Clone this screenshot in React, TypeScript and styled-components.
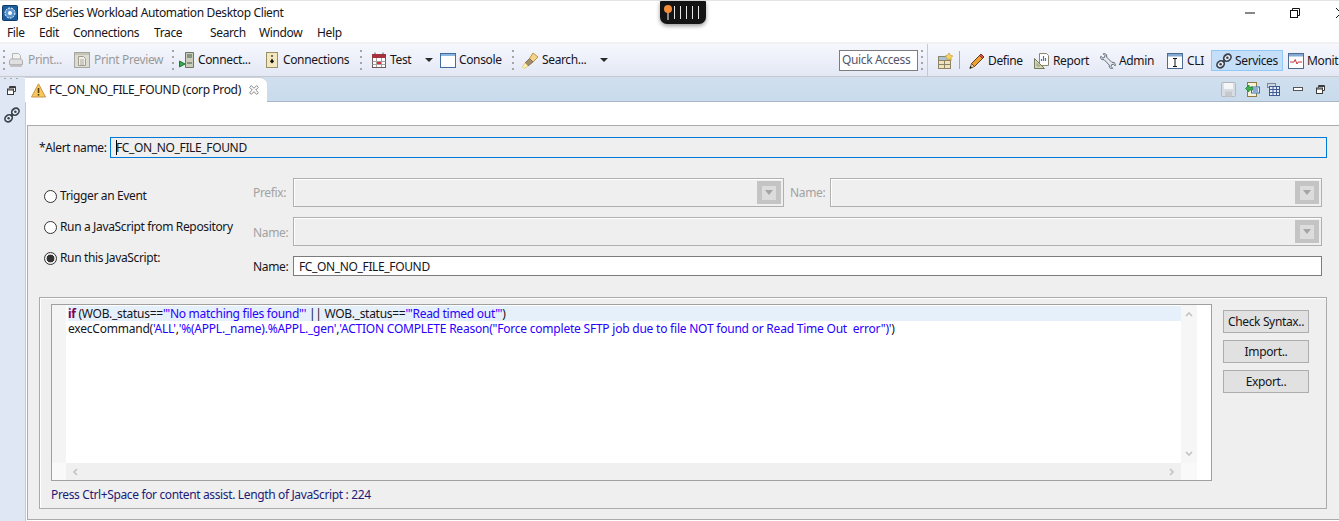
import React from "react";
import styled, { createGlobalStyle } from "styled-components";

const Global = createGlobalStyle`
  html, body { margin: 0; padding: 0; background: #fff; }
  body { font-family: "Noto Sans", "Open Sans", sans-serif; font-size: 12px; letter-spacing: -0.36px; color: #151520; }
  * { box-sizing: border-box; }
`;

const Page = styled.div`
  position: relative; width: 1339px; height: 521px; overflow: hidden; background: #fff;
  display: flex; flex-direction: column; line-height: 16px;
`;
const TitleBar = styled.div`
  height: 24px; flex: none; border-top: 1px solid #e4e4e4; display: flex; align-items: center; padding-left: 2px;
`;
const TitleText = styled.span` margin-left: 5px; white-space: nowrap; `;
const WinControls = styled.div` margin-left: auto; display: flex; align-items: center; `;
const WinBtn = styled.span<{ $ml: number }>` margin-left: ${p => p.$ml}px; display: flex; `;
const Recorder = styled.div`
  position: absolute; left: 660px; top: 1px; width: 46px; height: 23px; background: #141414;
  border-radius: 1px 1px 7px 7px; box-shadow: 0 2px 4px rgba(0,0,0,.4);
`;
const MenuBar = styled.div` height: 18px; flex: none; display: flex; align-items: center; padding-left: 7px; `;
const Menu = styled.span<{ $w: number }>` width: ${p => p.$w}px; flex: none; white-space: nowrap; `;
const Toolbar = styled.div`
  height: 35px; flex: none; display: flex; align-items: center; position: relative;
  border-top: 2px solid #f1f1f3; border-bottom: 1px solid #c9c9cd;
  background: linear-gradient(#f6f8fd, #e3e8f5);
`;
const Item = styled.span<{ $ml?: number; $w?: number; $off?: boolean; $drop?: boolean }>`
  margin-left: ${p => p.$ml ?? 0}px; width: ${p => (p.$w ? `${p.$w}px` : "auto")}; display: flex; align-items: center; white-space: nowrap; flex: none;
  color: ${p => (p.$off ? "#9a9a9a" : "inherit")};
  padding-top: ${p => (p.$drop ? 2 : 0)}px;
`;
const Label = styled.span<{ $ml?: number }>` margin-left: ${p => p.$ml ?? 4}px; `;
const Grip = styled.span<{ $ml: number }>`
  margin-left: ${p => p.$ml}px; width: 2px; height: 21px; flex: none;
  background: repeating-linear-gradient(#a5a5a5 0 2px, transparent 2px 6px);
`;
const Sep = styled.span<{ $ml: number }>` margin-left: ${p => p.$ml}px; width: 1px; height: 18px; background: #a9a9a9; flex: none; `;
const SwitcherEdge = styled.span`
  margin-left: 4px; width: 1px; align-self: stretch; flex: none; background: #c9c9cd;
`;
const Caret = styled.span`
  width: 8px; height: 0; flex: none;
  border-left: 4px solid transparent; border-right: 4px solid transparent; border-top: 4px solid #2a2a2a;
`;
const QuickAccess = styled.span`
  margin-left: 231px; width: 79px; height: 21px; flex: none; border: 1px solid #7d7d7d; background: #fff;
  color: #55556a; padding-left: 2px; line-height: 18px; white-space: nowrap; overflow: hidden;
`;
const ActiveItem = styled(Item)`
  height: 21px; margin-top: 1px; background: #c5dff8; border: 1px solid #90c8f6; padding-left: 4px; padding-top: 1px;
`;
const Body = styled.div` flex: 1; display: flex; min-height: 0; `;
const Rail = styled.div`
  width: 26px; flex: none; background: #dfe7f5; border-right: 1px solid #c3c9d3;
  display: flex; flex-direction: column; align-items: flex-start; padding: 1px 0 0 4px;
`;
const RailGrip = styled.span`
  width: 16px; height: 1px; flex: none; background: repeating-linear-gradient(90deg, #a5a5a5 0 2px, transparent 2px 6px);
`;
const RailIcon = styled.span<{ $mt: number; $ml: number }>` display: flex; margin: ${p => p.$mt}px 0 0 ${p => p.$ml}px; `;
const Main = styled.div` flex: 1; min-width: 0; display: flex; flex-direction: column; `;
const TabBand = styled.div`
  height: 25px; flex: none; display: flex; align-items: stretch;
  background: linear-gradient(#cfdfee, #c9dbec); border-bottom: 1px solid #a9b6c6;
`;
const Tab = styled.div`
  width: 242px; margin-left: -1px; height: 25px; background: #fff; border-radius: 0 7px 0 0; display: flex; align-items: center; padding-left: 6px; white-space: nowrap;
  border-top: 1px solid #c8d2de;
`;
const TabClose = styled.span` margin-left: 8px; display: flex; `;
const TabTools = styled.div` margin-left: auto; display: flex; align-items: center; padding-right: 14px; `;
const Gap = styled.div` height: 23px; flex: none; `;
const Form = styled.div`
  margin-left: 1px; height: 395px; flex: none; background: #efefef; border: 1px solid #ababab; border-right: none; padding: 11px 0 0 11px;
`;
const AlertRow = styled.div` display: flex; align-items: center; height: 21px; `;
const AlertLabel = styled.span` width: 71px; white-space: nowrap; `;
const AlertInput = styled.div`
  width: 1217px; height: 21px; border: 1px solid #0078d7; padding-left: 5px; line-height: 19px; position: relative;
`;
const Cursor = styled.span` position: absolute; left: 5px; top: 2px; width: 1px; height: 15px; background: #000; `;
const Options = styled.div` display: flex; margin-top: 20px; `;
const RadioCol = styled.div` width: 214px; flex: none; padding: 10px 0 0 5px; display: flex; flex-direction: column; gap: 15px; `;
const RadioRow = styled.div` display: flex; align-items: center; height: 16px; white-space: nowrap; `;
const RadioMark = styled.span<{ $on?: boolean }>`
  width: 13px; height: 13px; border: 1px solid #333; border-radius: 50%; background: ${p => (p.$on ? "radial-gradient(circle, #333 0 3.6px, transparent 4.2px)" : "#fff")}; margin-right: 3px; flex: none;
`;
const FieldCol = styled.div` width: 1069px; display: flex; flex-direction: column; gap: 10px; `;
const FieldRow = styled.div` display: flex; align-items: center; `;
const FieldLabel = styled.span<{ $off?: boolean; $ml?: number; $drop?: boolean }>`
  width: 40px; flex: none; margin-left: ${p => p.$ml ?? 0}px; white-space: nowrap; color: ${p => (p.$off ? "#a2a2a2" : "inherit")};
  padding-top: ${p => (p.$drop ? 2 : 0)}px;
`;
const Combo = styled.div<{ $w: number }>`
  width: ${p => p.$w}px; height: 29px; flex: none; border: 1px solid #b0b0b0; box-shadow: inset 1px 1px 0 #fff; background: #efefef;
  display: flex; justify-content: flex-end; align-items: center; padding-right: 2px;
`;
const ComboBtn = styled.span`
  width: 24px; height: 23px; background: #c4c4c4; display: flex; align-items: center; justify-content: center;
`;
const ComboInner = styled.span`
  width: 14px; height: 14px; background: #dcdcdc; display: flex; align-items: center; justify-content: center;
`;
const ComboArrow = styled.span`
  width: 0; height: 0; border-left: 4px solid transparent; border-right: 4px solid transparent; border-top: 5px solid #a4a4a4;
`;
const TextField = styled.div<{ $w: number }>`
  width: ${p => p.$w}px; height: 20px; border: 1px solid #7c7c7c; background: #fff; padding-left: 5px; line-height: 20px;
`;
const Group = styled.div`
  margin-top: 21px; width: 1288px; height: 212px; border: 1px solid #ababab; box-shadow: inset 1px 1px 0 #fff; padding: 6px 0 0 11px;
`;
const GroupTop = styled.div` display: flex; `;
const Editor = styled.div`
  width: 1161px; height: 177px; border: 1px solid #a0a0a0; background: #fff; display: grid;
  grid-template-columns: 14px 1115px 16px 14px; grid-template-rows: 158px 17px;
`;
const Ruler = styled.div<{ $light?: boolean }>` background: ${p => (p.$light ? "#f9f9f9" : "#f4f4f4")}; `;
const Code = styled.div` padding: 1px 0 0 2px; white-space: pre; `;
const CodeLine = styled.div<{ $cur?: boolean }>`
  height: 15px; line-height: 15px; background: ${p => (p.$cur ? "#e6f0fb" : "transparent")};
  letter-spacing: ${p => (p.$cur ? -0.28 : -0.22)}px;
`;
const Keyword = styled.b` color: #7f0055; font-weight: 700; `;
const Str = styled.span` color: #2a00ff; `;
const VScroll = styled.div`
  background: #f6f6f6; display: flex; flex-direction: column; justify-content: space-between; align-items: center; padding: 5px 0;
`;
const HScroll = styled.div`
  background: #f0f0f0; display: flex; justify-content: space-between; align-items: center; padding: 0 5px 0 5px;
`;
const Side = styled.div` margin: 6px 0 0 11px; display: flex; flex-direction: column; gap: 7px; `;
const Button = styled.div`
  width: 86px; height: 23px; background: #e1e1e1; border: 1px solid #adadad; text-align: center; line-height: 21px; white-space: nowrap;
`;
const Status = styled.div` margin-top: 6px; color: #1c1c78; `;

const Ico = ({ w = 16, h = 16, children }: { w?: number; h?: number; children: React.ReactNode }) => (
  <svg width={w} height={h} viewBox={`0 0 ${w} ${h}`} fill="none" style={{ display: "block", flex: "none" }}>{children}</svg>
);

const Logo = () => (
  <Ico>
    <rect x="0.5" y="0.5" width="15" height="15" rx="1" fill="#1b5e9e" stroke="#0d3b6b" />
    <circle cx="8" cy="8" r="5" fill="#5a93cc" stroke="#fff" strokeDasharray="2 1" />
    <circle cx="8" cy="8" r="2" fill="#fff" />
  </Ico>
);
const PrintIco = () => (
  <Ico>
    <path d="M4.5 1.5h6l2 2v5h-8z" fill="#f2f2f2" stroke="#b5b5b5" />
    <path d="M1.500 9c0-1 1-2 2-2h9c1 0 2 1 2 2v3.500h-13z" fill="#e0e0e0" stroke="#adadad" />
    <path d="M1.500 12.500h13l-1 2.500h-11z" fill="#c2c2c2" />
  </Ico>
);
const PreviewIco = () => (
  <Ico>
    <rect x="0.5" y="0.5" width="15" height="15" fill="#dcdcd2" stroke="#a6a69a" />
    <path d="M1 1h14v2H1z" fill="#c4c4b8" />
    <path d="M4.500 4.500h5l2 2v7h-7z" fill="#efefe8" stroke="#9d9d92" />
    <path d="M6 8h4M6 10h4M6 12h4" stroke="#a8a89c" />
  </Ico>
);
const ConnectIco = () => (
  <Ico>
    <path d="M6.500 0.500h8v15h-8z" fill="#c9cdb9" stroke="#6f7565" />
    <path d="M8 3h5M8 5h5" stroke="#40604a" />
    <rect x="8" y="10" width="5" height="2" fill="#8a9180" />
    <path d="M0.500 9v6l5.500-3z" fill="#37a84c" stroke="#1f7a33" />
  </Ico>
);
const ConnectionsIco = () => (
  <Ico w={12} h={16}>
    <rect x="0.500" y="0.500" width="11" height="15" fill="#f3e7bd" stroke="#9c8f64" />
    <circle cx="6" cy="4" r="1" fill="#444" />
    <path d="M6 6.500l2 3-2 2-2-2z" fill="#111" />
  </Ico>
);
const CalendarIco = () => (
  <Ico w={14} h={16}>
    <rect x="0.500" y="2.500" width="13" height="13" fill="#fff" stroke="#6f5a5a" />
    <rect x="0" y="2" width="14" height="4" fill="#a92f3a" />
    <path d="M3 0.500v3M11 0.500v3" stroke="#555" />
    <path d="M0.500 9.500h13M0.500 12.500h13M4.500 6v9M9.500 6v9" stroke="#a9a0a0" />
    <rect x="5" y="10" width="4" height="2" fill="#d2343f" />
  </Ico>
);
const ConsoleIco = () => (
  <Ico>
    <rect x="0.500" y="1.500" width="15" height="14" fill="#fff" stroke="#3f6d9f" />
    <rect x="1" y="2" width="14" height="2" fill="#8db6df" />
  </Ico>
);
const TorchIco = () => (
  <Ico w={17} h={17}>
    <path d="M11 1l5 4-5 5-3.500-3.500z" fill="#f2d48a" stroke="#b7892f" strokeWidth=".9" />
    <path d="M7.500 6.500L11 10l-5 4-3-3z" fill="#a58e6a" stroke="#7c6a4c" strokeWidth=".9" />
    <path d="M3 11l3 3-4 2.500L.5 15z" fill="#fff4bd" stroke="#e2c25a" strokeWidth=".8" />
  </Ico>
);
const PerspIco = () => (
  <Ico w={15} h={16}>
    <rect x="0.500" y="3.500" width="12" height="12" fill="#f1e2bd" stroke="#8d8567" />
    <rect x="1" y="4" width="11" height="3" fill="#a9c3dc" />
    <path d="M0.500 7.500h12M0.500 11.500h12M6.500 7.500v8" stroke="#8d8567" />
    <path d="M11 0l1.200 2.200L14.800 3l-2 1.700.5 2.500L11 6l-2.300 1.200.5-2.500L7.200 3l2.600-.8z" fill="#f8d665" stroke="#c79a2c" strokeWidth=".7" />
  </Ico>
);
const PencilIco = () => (
  <Ico>
    <path d="M12 1l3 3-9.500 9.500-3-3z" fill="#f0a030" stroke="#5f4018" />
    <path d="M12 1l3 3-1.500 1.500-3-3z" fill="#d9534a" stroke="#6b2a1c" strokeWidth=".8" />
    <path d="M2.500 10.500l3 3-4.500 2z" fill="#f0d9a8" stroke="#5f4018" strokeWidth=".8" />
    <path d="M.5 15.500l.8-2.500 1.700 1.700z" fill="#111" />
  </Ico>
);
const ReportIco = () => (
  <Ico w={15} h={16}>
    <path d="M5.500 0.500h7l2 2v10h-9z" fill="#fff" stroke="#8a8a6f" />
    <path d="M7.500 8V6M9.500 8V3M11.500 8V5" stroke="#3f77b8" strokeWidth="1.200" />
    <path d="M0.500 5.500v10h10z" fill="#cfd2ac" fillOpacity=".85" stroke="#747a5a" />
    <path d="M3 10.500v2.500h2.500z" fill="#fff" stroke="#747a5a" strokeWidth=".7" />
  </Ico>
);
const WrenchIco = () => (
  <Ico>
    <path d="M.8 3.300l2 1.700 1.700-.6.500-1.700L3.200.8C5 .1 6.600 1.200 6.700 3l-.1 1.100 5.300 5.300 1.100-.1c1.800.1 2.900 1.700 2.200 3.500l-1.900-1.600-1.700.5-.6 1.700 1.700 2c-1.700.7-3.400-.4-3.500-2.200l.1-1.100L4 6.600l-1.100.1C1.100 6.600-.1 5 .8 3.300z" fill="#e6eaee" stroke="#4f5c69" strokeWidth=".9" />
  </Ico>
);
const CliIco = () => (
  <Ico>
    <rect x="0.500" y="0.500" width="15" height="15" fill="#fff" stroke="#4e6c90" />
    <rect x="1" y="1" width="14" height="2.500" fill="#84a9d2" />
    <path d="M6 5.500h4M6 13.500h4M8 5.500v8" stroke="#111" />
  </Ico>
);
const ChainIco = () => (
  <Ico>
    <g stroke="#39434f" strokeWidth="1.700" fill="#eef2f6">
      <ellipse cx="4.600" cy="11.300" rx="3.900" ry="3.200" transform="rotate(-40 4.600 11.300)" />
      <ellipse cx="11.400" cy="4.700" rx="3.900" ry="3.200" transform="rotate(-40 11.400 4.700)" />
    </g>
    <circle cx="4.600" cy="11.300" r="1.300" fill="#39434f" />
    <circle cx="11.400" cy="4.700" r="1.300" fill="#39434f" />
    <path d="M6.800 9.200l2.400-2.400" stroke="#39434f" strokeWidth="2.200" />
  </Ico>
);
const MonitorIco = () => (
  <Ico>
    <rect x="0.500" y="0.500" width="15" height="15" fill="#fff" stroke="#4e6c90" />
    <rect x="1" y="1" width="14" height="2.500" fill="#84a9d2" />
    <path d="M2 9h4l1.200-2.500L9 11l1.200-2H14" stroke="#c9343c" />
  </Ico>
);
const RestoreSmall = () => (
  <Ico w={9} h={9}>
    <path d="M2.500 2.500v-2h6v5h-2" stroke="#3c3c3c" fill="#fff" />
    <path d="M3 1.500h5" stroke="#3c3c3c" />
    <rect x="0.500" y="3" width="6" height="5.500" fill="#fff" stroke="#3c3c3c" />
    <path d="M1 4h5" stroke="#3c3c3c" />
  </Ico>
);
const Warn = () => (
  <Ico w={15} h={15}>
    <path d="M7.500 0.800L14.500 14H0.500z" fill="#f7c85a" stroke="#c99350" strokeLinejoin="round" />
    <path d="M7.500 5v5" stroke="#5a3a10" strokeWidth="1.600" />
    <rect x="6.700" y="11" width="1.600" height="1.600" fill="#5a3a10" />
  </Ico>
);
const CloseX = () => (
  <Ico w={10} h={10}>
    <path d="M.6 2.300L2.300.6 5 3.300 7.700.6l1.700 1.700L6.700 5l2.700 2.700-1.700 1.700L5 6.700 2.300 9.400.6 7.700 3.300 5z" fill="#fff" stroke="#7a7a7a" strokeWidth=".9" />
  </Ico>
);
const Chev = ({ d }: { d: string }) => (
  <Ico w={8} h={8}><path d={d} stroke="#c3c3c3" strokeWidth="1.700" /></Ico>
);
const SaveOff = () => (
  <Ico w={15} h={15}>
    <rect x="0.500" y="0.500" width="14" height="14" rx="1" fill="#d8dde3" stroke="#b4b8bd" />
    <rect x="3" y="1" width="9" height="6" fill="#f4f6f8" />
    <rect x="4" y="9.500" width="7" height="5" fill="#c6cad0" />
  </Ico>
);
const ImportIco = () => (
  <Ico w={15} h={15}>
    <rect x="2.500" y="0.500" width="9" height="14" fill="#f9f4d8" stroke="#8c7a45" />
    <rect x="6.500" y="5" width="8" height="6" fill="#dce9f7" stroke="#3a6fb0" />
    <path d="M8 7h5M8 9h5" stroke="#3a6fb0" />
    <path d="M0.500 6.500L4 3v2h3.500v3H4v2z" fill="#3cb34e" stroke="#1d7a32" strokeWidth=".7" />
  </Ico>
);
const TableIco = () => (
  <Ico w={13} h={13}>
    <rect x="0.500" y="0.500" width="8" height="4" fill="#cdd6e0" stroke="#7b8899" />
    <rect x="2.500" y="3.500" width="10" height="9" fill="#e5ecf6" stroke="#3f5a92" />
    <path d="M2.500 6.500h10M2.500 9.500h10M6 3.500v9M9.500 3.500v9" stroke="#3f5a92" />
  </Ico>
);

export default function App() {
  return (
    <Page>
      <Global />
      <TitleBar>
        <Logo />
        <TitleText>ESP dSeries Workload Automation Desktop Client</TitleText>
        <WinControls>
          <WinBtn $ml={0}><Ico w={10} h={2}><path d="M0 1h10" stroke="#111" /></Ico></WinBtn>
          <WinBtn $ml={35}>
            <Ico w={10} h={10}>
              <path d="M2.500 2V.5h7v7H8" stroke="#111" />
              <rect x="0.500" y="2.500" width="7" height="7" stroke="#111" />
            </Ico>
          </WinBtn>
          <WinBtn $ml={36}><Ico w={3} h={10}><path d="M0 0l5 5-5 5" stroke="#111" /></Ico></WinBtn>
        </WinControls>
      </TitleBar>
      <Recorder>
        <svg width="46" height="23" viewBox="0 0 46 23" fill="none" style={{ display: "block" }}>
          <path d="M8 9v10" stroke="#fff" />
          <circle cx="8" cy="8" r="4" fill="#f28c38" />
          <path d="M14.500 5v13M20.500 5v13M26.500 5v13M32.500 5v13M38.500 5v13" stroke="#e6e6e6" />
        </svg>
      </Recorder>
      <MenuBar>
        <Menu $w={32}>File</Menu>
        <Menu $w={34}>Edit</Menu>
        <Menu $w={81}>Connections</Menu>
        <Menu $w={56}>Trace</Menu>
        <Menu $w={49}>Search</Menu>
        <Menu $w={58}>Window</Menu>
        <Menu $w={30}>Help</Menu>
      </MenuBar>
      <Toolbar>
        <Grip $ml={3} />
        <Item $ml={3} $w={66} $off><PrintIco /><Label>Print...</Label></Item>
        <Item $w={98} $off><PreviewIco /><Label>Print Preview</Label></Item>
        <Grip $ml={0} />
        <Item $ml={5} $w={87}><ConnectIco /><Label $ml={3}>Connect...</Label></Item>
        <Item $w={94}><ConnectionsIco /><Label $ml={5}>Connections</Label></Item>
        <Grip $ml={0} />
        <Item $ml={10} $w={53}><CalendarIco /><Label>Test</Label></Item>
        <Caret />
        <Item $ml={7} $w={72}><ConsoleIco /><Label $ml={3}>Console</Label></Item>
        <Grip $ml={0} />
        <Item $ml={8} $w={78}><TorchIco /><Label $ml={3}>Search...</Label></Item>
        <Caret />
        <QuickAccess>Quick Access</QuickAccess>
        <Grip $ml={3} />
        <SwitcherEdge />
        <Item $ml={10} $w={15} $drop><PerspIco /></Item>
        <Sep $ml={6} />
        <Item $ml={9} $w={65} $drop><PencilIco /><Label $ml={3}>Define</Label></Item>
        <Item $w={66} $drop><ReportIco /><Label>Report</Label></Item>
        <Item $w={67} $drop><WrenchIco /><Label $ml={3}>Admin</Label></Item>
        <Item $w={44} $drop><CliIco /><Label>CLI</Label></Item>
        <ActiveItem $w={72}><ChainIco /><Label $ml={3}>Services</Label></ActiveItem>
        <Item $ml={5} $drop><MonitorIco /><Label $ml={3}>Monit</Label></Item>
      </Toolbar>
      <Body>
        <Rail>
          <RailGrip />
          <RailIcon $mt={7} $ml={3}><RestoreSmall /></RailIcon>
          <RailIcon $mt={12} $ml={0}><ChainIco /></RailIcon>
        </Rail>
        <Main>
          <TabBand>
            <Tab>
              <Warn />
              <Label $ml={3}>FC_ON_NO_FILE_FOUND (corp Prod)</Label>
              <TabClose><CloseX /></TabClose>
            </Tab>
            <TabTools>
              <SaveOff />
              <WinBtn $ml={9}><ImportIco /></WinBtn>
              <WinBtn $ml={7}><TableIco /></WinBtn>
              <WinBtn $ml={13}>
                <Ico w={10} h={4}><rect x="0.500" y="0.500" width="9" height="3" fill="#fff" stroke="#555" /></Ico>
              </WinBtn>
              <WinBtn $ml={13}><RestoreSmall /></WinBtn>
            </TabTools>
          </TabBand>
          <Gap />
          <Form>
            <AlertRow>
              <AlertLabel>*Alert name:</AlertLabel>
              <AlertInput><Cursor />FC_ON_NO_FILE_FOUND</AlertInput>
            </AlertRow>
            <Options>
              <RadioCol>
                <RadioRow><RadioMark />Trigger an Event</RadioRow>
                <RadioRow><RadioMark />Run a JavaScript from Repository</RadioRow>
                <RadioRow><RadioMark $on />Run this JavaScript:</RadioRow>
              </RadioCol>
              <FieldCol>
                <FieldRow>
                  <FieldLabel $off>Prefix:</FieldLabel>
                  <Combo $w={491}><ComboBtn><ComboInner><ComboArrow /></ComboInner></ComboBtn></Combo>
                  <FieldLabel $off $ml={6}>Name:</FieldLabel>
                  <Combo $w={492}><ComboBtn><ComboInner><ComboArrow /></ComboInner></ComboBtn></Combo>
                </FieldRow>
                <FieldRow>
                  <FieldLabel $off $drop>Name:</FieldLabel>
                  <Combo $w={1029}><ComboBtn><ComboInner><ComboArrow /></ComboInner></ComboBtn></Combo>
                </FieldRow>
                <FieldRow>
                  <FieldLabel $drop>Name:</FieldLabel>
                  <TextField $w={1029}>FC_ON_NO_FILE_FOUND</TextField>
                </FieldRow>
              </FieldCol>
            </Options>
            <Group>
              <GroupTop>
                <Editor>
                  <Ruler />
                  <Code>
                    <CodeLine $cur>
                      <Keyword>if</Keyword> (WOB._status==<Str>'"No matching files found"'</Str> || WOB._status==<Str>'"Read timed out"'</Str>)
                    </CodeLine>
                    <CodeLine>
                      execCommand(<Str>'ALL'</Str>,<Str>'%(APPL._name).%APPL._gen'</Str>,<Str>'ACTION COMPLETE Reason("Force complete SFTP job due to file NOT found or Read Time Out  error")'</Str>)
                    </CodeLine>
                  </Code>
                  <VScroll>
                    <Chev d="M1 6l3-3 3 3" />
                    <Chev d="M1 2l3 3 3-3" />
                  </VScroll>
                  <div />
                  <Ruler $light />
                  <HScroll>
                    <Chev d="M6 1L3 4l3 3" />
                    <Chev d="M2 1l3 3-3 3" />
                  </HScroll>
                  <Ruler $light />
                  <div />
                </Editor>
                <Side>
                  <Button>Check Syntax..</Button>
                  <Button>Import..</Button>
                  <Button>Export..</Button>
                </Side>
              </GroupTop>
              <Status>Press Ctrl+Space for content assist. Length of JavaScript : 224</Status>
            </Group>
          </Form>
        </Main>
      </Body>
    </Page>
  );
}
